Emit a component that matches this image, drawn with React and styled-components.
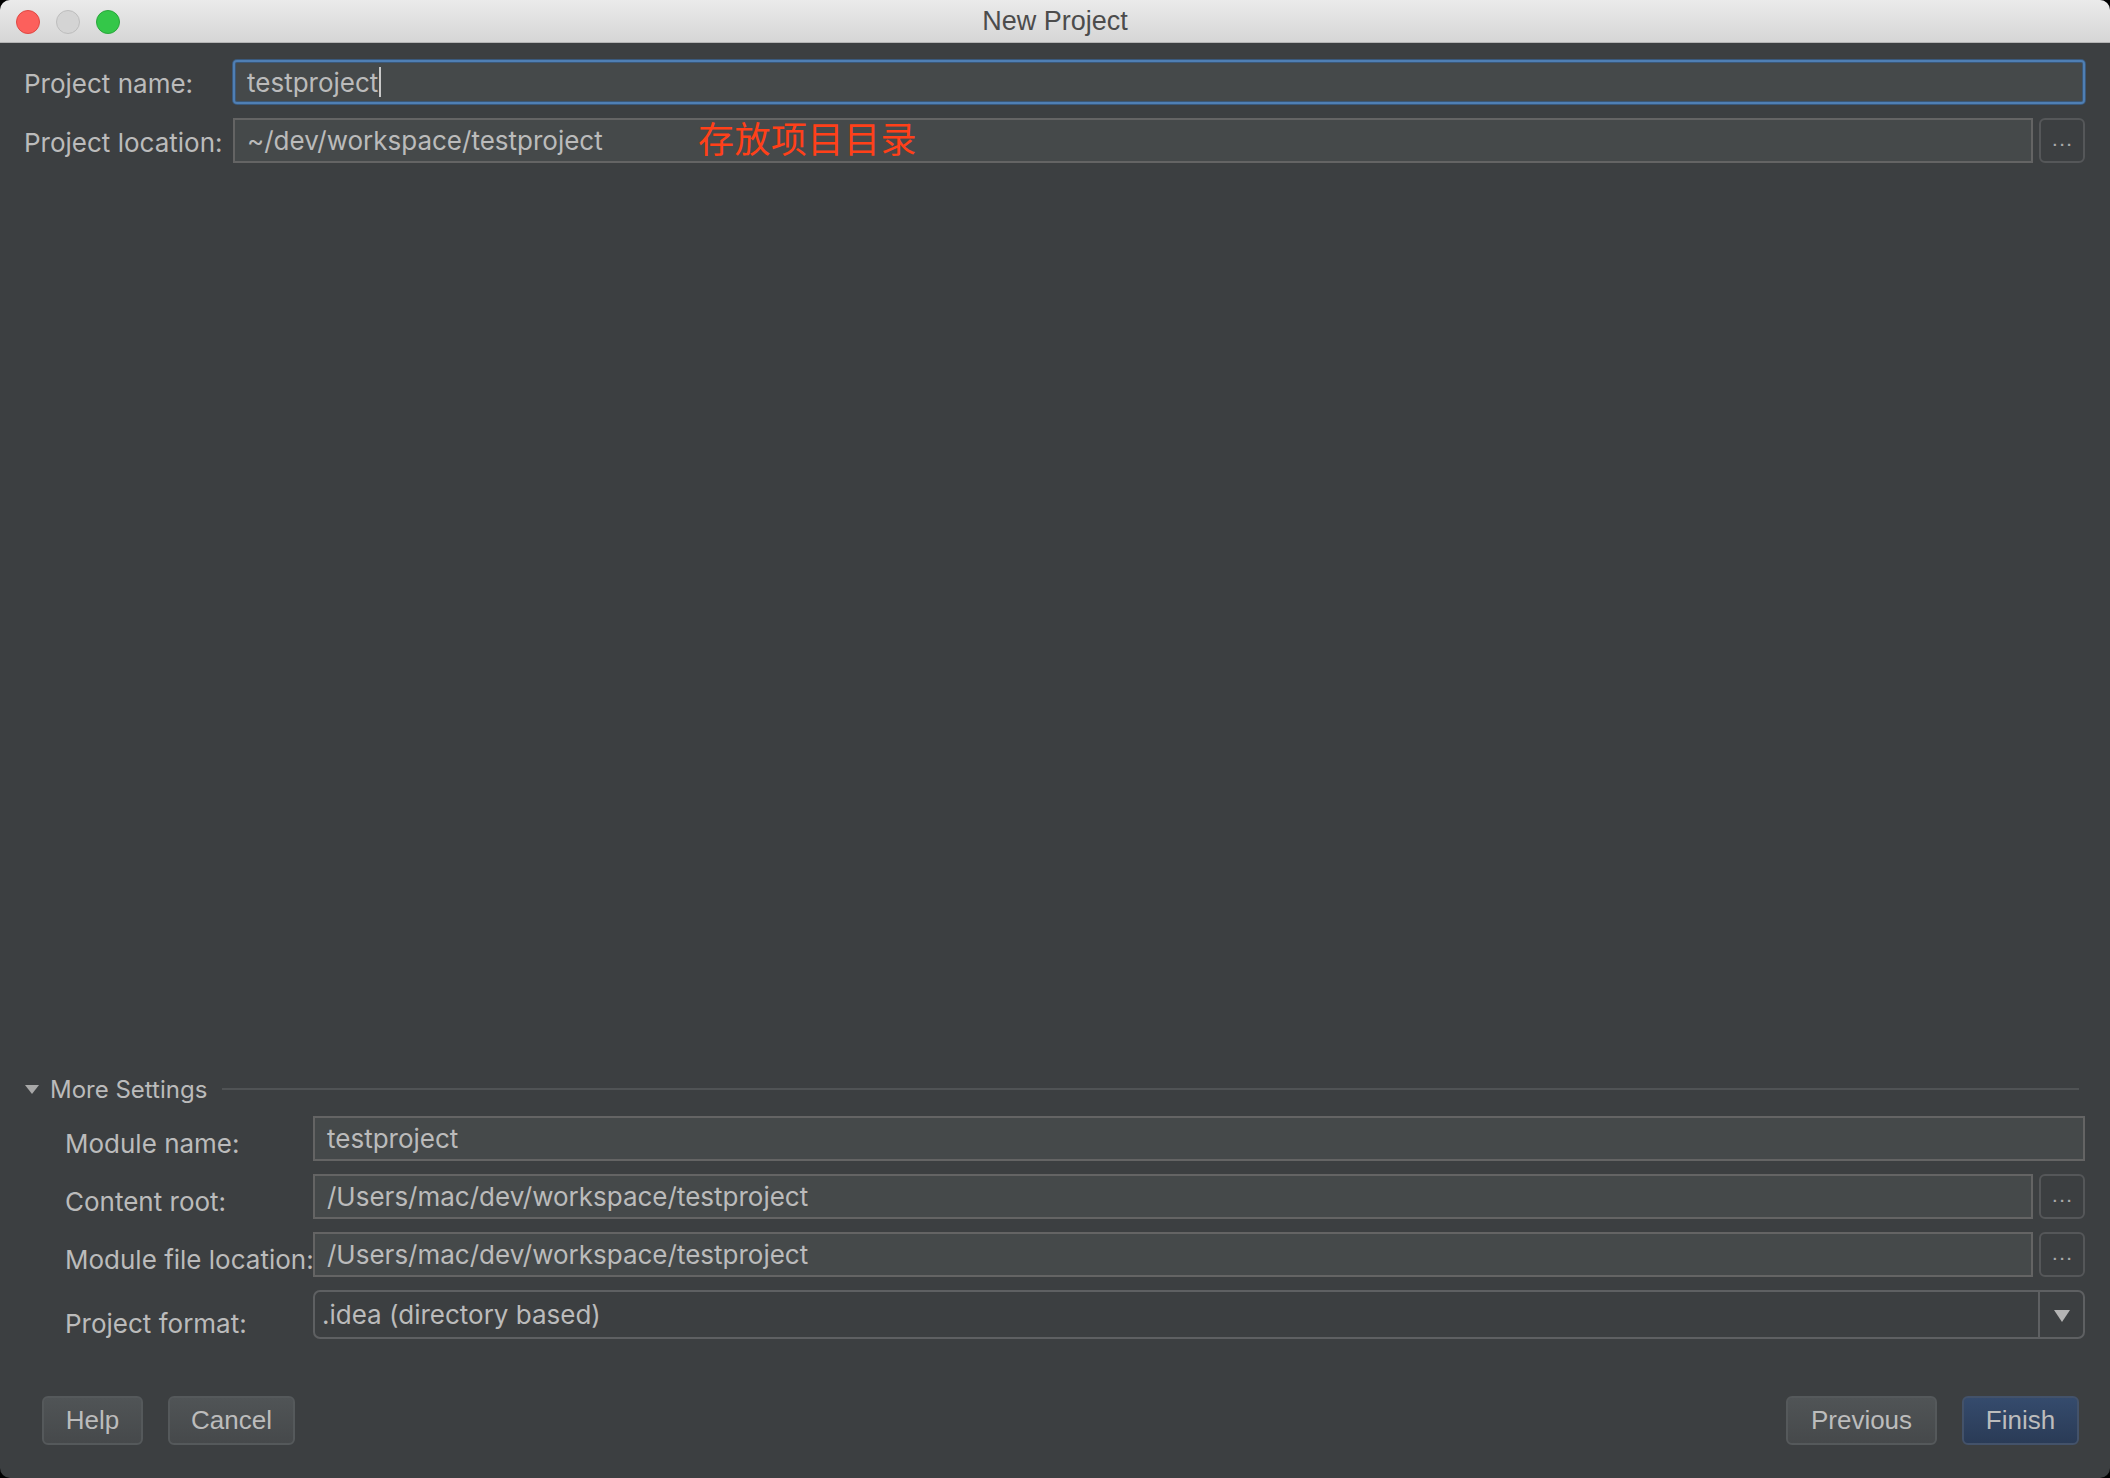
import React from "react"
import styled, { createGlobalStyle } from "styled-components"

const GlobalStyle = createGlobalStyle`
  html, body {
    margin: 0;
    padding: 0;
    background: #000;
  }
  #root {
    height: 1478px;
  }
`

const Window = styled.div`
  width: 2110px;
  height: 1478px;
  display: flex;
  flex-direction: column;
  background: #3c3f41;
  border-radius: 10px;
  overflow: hidden;
  font-family: Inter, "Liberation Sans", sans-serif;
  font-size: 26px;
  color: #bbbbbb;
`

const TitleBar = styled.div`
  position: relative;
  height: 42px;
  flex: none;
  display: flex;
  align-items: center;
  justify-content: center;
  background: linear-gradient(180deg, #ebebeb 0%, #d6d6d6 100%);
  border-bottom: 1px solid #b4b4b4;
  color: #4c4c4c;
  font-family: "Liberation Sans", Arial, sans-serif;
  font-size: 27px;
`

const Lights = styled.div`
  position: absolute;
  left: 16px;
  top: 10px;
  display: flex;
  gap: 16px;
`

const Light = styled.span`
  width: 22px;
  height: 22px;
  border-radius: 50%;
  background: ${(p) => p.$fill};
  border: 1px solid ${(p) => p.$edge};
`

const Body = styled.div`
  flex: 1;
  display: flex;
  flex-direction: column;
  padding: 17px 25px 0 24px;
`

const TopForm = styled.div`
  display: grid;
  grid-template-columns: 209px 1fr;
  row-gap: 14px;
  align-items: center;
`

const Label = styled.label`
  white-space: nowrap;
  padding-top: ${(p) => p.$drop || 3}px;
`

const FieldRow = styled.div`
  display: flex;
  gap: 6px;
  height: ${(p) => p.$h || 45}px;
`

const Input = styled.div`
  position: relative;
  flex: 1;
  display: flex;
  align-items: center;
  box-sizing: border-box;
  padding-left: 12px;
  background: #45494a;
  border: 2px solid ${(p) => (p.$focused ? "#4f7fb4" : "#646464")};
  border-radius: ${(p) => (p.$focused ? "4px" : "0")};
  box-shadow: ${(p) => (p.$focused ? "0 0 0 1px #3a5a7e, inset 0 0 0 1px #3b5878" : "none")};
  white-space: nowrap;
`

const Caret = styled.span`
  display: inline-block;
  width: 2px;
  height: 30px;
  margin-left: 1px;
  background: #c8c8c8;
  vertical-align: middle;
`

const Note = styled.span`
  position: absolute;
  left: 463px;
  top: 50%;
  transform: translateY(-57%);
  color: #ff4019;
  font-family: "Noto Sans CJK SC", "Noto Sans", sans-serif;
  font-size: 36px;
  letter-spacing: 0.5px;
`

const Browse = styled.button`
  width: 46px;
  flex: none;
  box-sizing: border-box;
  background: #3c3f41;
  border: 2px solid #555759;
  border-radius: 6px;
  color: #a9a9a9;
  font-family: "Liberation Sans", Arial, sans-serif;
  font-size: 15px;
  font-weight: bold;
  letter-spacing: 3px;
  padding: 0 0 0 3px;
  line-height: 1;
`

const Spacer = styled.div`
  flex: 1;
`

const SettingsHead = styled.div`
  display: flex;
  align-items: center;
  height: 28px;
  gap: 11px;
  margin-bottom: 13px;
`

const Triangle = styled.span`
  width: 0;
  height: 0;
  border-left: 7px solid transparent;
  border-right: 7px solid transparent;
  border-top: 9px solid #a8a8a8;
  margin-left: 1px;
`

const HeadText = styled.span`
  white-space: nowrap;
  font-size: 24px;
`

const Rule = styled.div`
  flex: 1;
  height: 2px;
  background: #505355;
  margin: 0 6px 0 4px;
`

const SettingsForm = styled.div`
  display: grid;
  grid-template-columns: 248px 1fr;
  row-gap: 13px;
  align-items: center;
  padding-left: 41px;
`

const Combo = styled.div`
  flex: 1;
  display: flex;
  box-sizing: border-box;
  background: #3c3f41;
  border: 2px solid #5e6062;
  border-radius: 7px;
`

const ComboValue = styled.div`
  flex: 1;
  display: flex;
  align-items: center;
  padding-left: 7px;
`

const ComboArrow = styled.div`
  width: 43px;
  flex: none;
  display: flex;
  align-items: center;
  justify-content: center;
  border-left: 2px solid #5e6062;
  &::after {
    content: "";
    border-left: 8px solid transparent;
    border-right: 8px solid transparent;
    border-top: 12px solid #b4b4b4;
    margin-top: 2px;
  }
`

const Footer = styled.div`
  display: flex;
  align-items: center;
  gap: 25px;
  margin: 57px 6px 33px 18px;
`

const Button = styled.button`
  height: 49px;
  width: ${(p) => p.$w}px;
  box-sizing: border-box;
  border-radius: 6px;
  border: 2px solid ${(p) => (p.$primary ? "#43526a" : "#55595b")};
  background: ${(p) =>
    p.$primary
      ? "linear-gradient(180deg, #354b6d 0%, #2a3b56 100%)"
      : "linear-gradient(180deg, #505456 0%, #46494b 100%)"};
  color: #bcbcbc;
  font-family: "Liberation Sans", Arial, sans-serif;
  font-size: 26px;
  padding: 0;
`

const Push = styled.div`
  flex: 1;
`

export default function App() {
  return (
    <>
      <GlobalStyle />
      <Window>
        <TitleBar>
          <Lights>
            <Light $fill="#fc605c" $edge="#df4843" />
            <Light $fill="#d4d4d4" $edge="#bdbdbd" />
            <Light $fill="#34c749" $edge="#2aa63c" />
          </Lights>
          New Project
        </TitleBar>
        <Body>
          <TopForm>
            <Label>Project name:</Label>
            <FieldRow $h={44}>
              <Input $focused>
                testproject
                <Caret />
              </Input>
            </FieldRow>
            <Label>Project location:</Label>
            <FieldRow $h={45}>
              <Input>
                ~/dev/workspace/testproject
                <Note>存放项目目录</Note>
              </Input>
              <Browse>...</Browse>
            </FieldRow>
          </TopForm>

          <Spacer />

          <SettingsHead>
            <Triangle />
            <HeadText>More Settings</HeadText>
            <Rule />
          </SettingsHead>
          <SettingsForm>
            <Label $drop={9}>Module name:</Label>
            <FieldRow $h={45}>
              <Input>testproject</Input>
            </FieldRow>
            <Label $drop={9}>Content root:</Label>
            <FieldRow $h={45}>
              <Input>/Users/mac/dev/workspace/testproject</Input>
              <Browse>...</Browse>
            </FieldRow>
            <Label $drop={9}>Module file location:</Label>
            <FieldRow $h={45}>
              <Input>/Users/mac/dev/workspace/testproject</Input>
              <Browse>...</Browse>
            </FieldRow>
            <Label $drop={18}>Project format:</Label>
            <FieldRow $h={49}>
              <Combo>
                <ComboValue>.idea (directory based)</ComboValue>
                <ComboArrow />
              </Combo>
            </FieldRow>
          </SettingsForm>

          <Footer>
            <Button $w={101}>Help</Button>
            <Button $w={127}>Cancel</Button>
            <Push />
            <Button $w={151}>Previous</Button>
            <Button $w={117} $primary>Finish</Button>
          </Footer>
        </Body>
      </Window>
    </>
  )
}
